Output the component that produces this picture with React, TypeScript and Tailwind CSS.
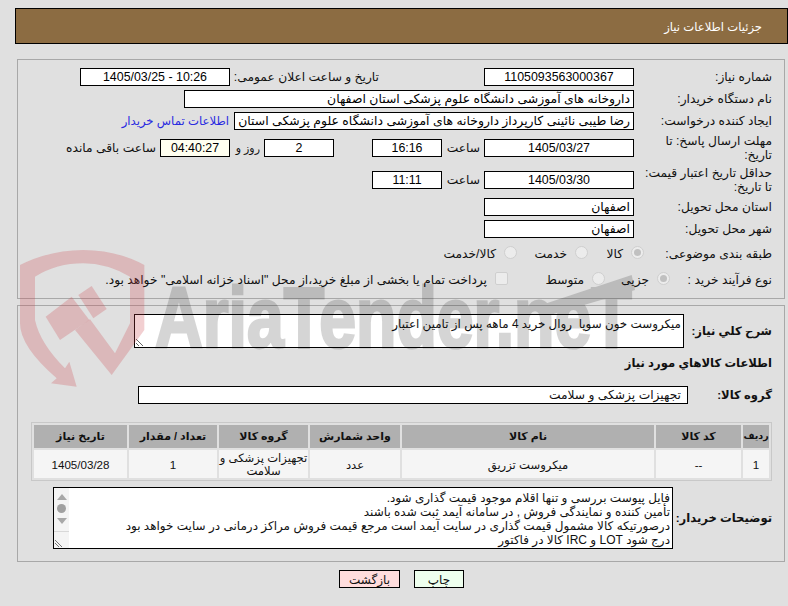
import React from "react";

const font = "[font-family:'Liberation_Sans','DejaVu_Sans',sans-serif]";
const box = "h-[18px] border border-black bg-white px-[3px] text-[12.4px] text-black outline-none shrink-0";

function Field({ w, value, center, bg }: { w: string; value: string; center?: boolean; bg?: string }) {
  return (
    <input
      readOnly
      value={value}
      className={`${box} ${w} ${center ? "text-center" : "text-right"} ${bg ?? ""}`}
    />
  );
}

function Label({ children, w }: { children: React.ReactNode; w?: string }) {
  return <div className={`${w ?? "w-[138px]"} shrink-0 pl-[6px] text-right leading-[14px]`}>{children}</div>;
}

function Radio({ checked, label, w }: { checked?: boolean; label: string; w: string }) {
  return (
    <div className={`flex items-center ${w} shrink-0`}>
      <span className="mb-1 flex h-[13px] w-[13px] shrink-0 items-center justify-center rounded-full border border-[#cfcfcf] bg-[#ececec]">
        {checked && <span className="h-[7px] w-[7px] rounded-full bg-[#c0c0c0]" />}
      </span>
      <span className="mr-[8px] whitespace-nowrap">{label}</span>
    </div>
  );
}

const cols = [
  { w: "w-[26px]", t: "text-[9.5px]", h: "ردیف", v: "1" },
  { w: "w-[85px]", t: "text-[11px]", h: "کد کالا", v: "--" },
  { w: "w-[252px]", t: "text-[11px]", h: "نام کالا", v: "میکروست تزریق" },
  { w: "w-[90px]", t: "text-[11px]", h: "واحد شمارش", v: "عدد" },
  { w: "w-[89px]", t: "text-[11px]", h: "گروه کالا", v: "تجهیزات پزشکی و\nسلامت" },
  { w: "w-[88px]", t: "text-[11px]", h: "تعداد / مقدار", v: "1" },
  { w: "w-[93px]", t: "text-[11px]", h: "تاریخ نیاز", v: "1405/03/28" },
];

export default function App() {
  return (
    <div dir="rtl" className={`relative h-[606px] w-[788px] overflow-hidden bg-[#e0e0e0] text-[12.25px] text-[#111] ${font}`}>
      <div className="ml-[15px] mt-[8px] flex h-[36px] items-center border border-black bg-[#8c6c42] pr-[25px] pt-px text-[11.6px] text-white">
        جزئیات اطلاعات نیاز
      </div>

      <div className="ml-[17px] mr-[3px] mt-[15px] h-[240px] border border-[#a8a8a8] pt-[6px] pr-[12px]">
        <div className="flex h-[22px] items-center">
          <Label>شماره نیاز:</Label>
          <Field w="w-[150px]" value="1105093563000367" center />
          <div className="w-[254px] shrink-0 whitespace-nowrap pr-[105px] text-right">تاریخ و ساعت اعلان عمومی:</div>
          <Field w="w-[150px]" value="10:26 - 1405/03/25" center />
        </div>
        <div className="flex h-[22px] items-center">
          <Label>نام دستگاه خریدار:</Label>
          <Field w="w-[450px]" value="داروخانه های آموزشی دانشگاه علوم پزشکی استان اصفهان" />
        </div>
        <div className="flex h-[22px] items-center">
          <Label>ایجاد کننده درخواست:</Label>
          <Field w="w-[400px]" value="رضا طیبی نائینی کارپرداز داروخانه های آموزشی دانشگاه علوم پزشکی استان اصفهان" />
          <span className="mr-[5px] whitespace-nowrap text-[11.7px] text-[#2a2ae0]">اطلاعات تماس خریدار</span>
        </div>
        <div className="flex h-[32px] items-center">
          <Label>مهلت ارسال پاسخ: تا تاریخ:</Label>
          <Field w="w-[150px]" value="1405/03/27" center />
          <div className="w-[42px] shrink-0 pr-[4px] text-right">ساعت</div>
          <Field w="w-[70px]" value="16:16" center />
          <div className="w-[38px] shrink-0" />
          <Field w="w-[70px]" value="2" center />
          <div className="w-[34px] shrink-0 pr-[4px] text-right text-[11px]">روز و</div>
          <Field w="w-[70px]" value="04:40:27" center bg="!bg-[#fffff0]" />
          <span className="mr-[4px] whitespace-nowrap">ساعت باقی مانده</span>
        </div>
        <div className="flex h-[32px] items-center">
          <Label>حداقل تاریخ اعتبار قیمت: تا تاریخ:</Label>
          <Field w="w-[150px]" value="1405/03/30" center />
          <div className="w-[42px] shrink-0 pr-[4px] text-right">ساعت</div>
          <Field w="w-[70px]" value="11:11" center />
        </div>
        <div className="flex h-[22px] items-center">
          <Label>استان محل تحویل:</Label>
          <Field w="w-[150px]" value="اصفهان" />
        </div>
        <div className="flex h-[22px] items-center">
          <Label>شهر محل تحویل:</Label>
          <Field w="w-[150px]" value="اصفهان" />
        </div>
        <div className="flex h-[28px] items-center">
          <Label w="w-[128px]">طبقه بندی موضوعی:</Label>
          <Radio checked label="کالا" w="w-[56px]" />
          <Radio label="خدمت" w="w-[71px]" />
          <Radio label="کالا/خدمت" w="w-[80px]" />
        </div>
        <div className="flex h-[24px] items-center">
          <Label w="w-[102px]">نوع فرآیند خرید :</Label>
          <Radio checked label="جزیی" w="w-[65px]" />
          <Radio label="متوسط" w="w-[97px]" />
          <span className="mb-1 h-[13px] w-[13px] shrink-0 rounded-[2px] border border-[#cfcfcf] bg-[#ececec]" />
          <span className="mr-[8px] whitespace-nowrap">پرداخت تمام یا بخشی از مبلغ خرید،از محل "اسناد خزانه اسلامی" خواهد بود.</span>
        </div>
      </div>

      <div className="ml-[17px] mr-[3px] mt-[6px] h-[257px] border border-[#a8a8a8] pr-[12px] pt-[8px]">
        <div className="flex h-[34px] items-center">
          <div className="w-[88px] shrink-0 whitespace-nowrap text-right text-[11.6px] font-bold">شرح کلي نیاز:</div>
          <textarea
            readOnly
            value="میکروست خون سوپا  روال خرید 4 ماهه پس از تامین اعتبار"
            className="h-[34px] w-[550px] border border-black bg-white px-[2px] py-[2px] text-[11.9px] leading-[14px] outline-none"
          />
        </div>
        <div className="flex h-[30px] items-center text-[11.6px] font-bold">اطلاعات کالاهاي مورد نیاز</div>
        <div className="mt-[8px] flex h-[18px] items-center">
          <div className="w-[84px] shrink-0 whitespace-nowrap text-right text-[11.6px] font-bold">گروه کالا:</div>
          <input
            readOnly
            value="تجهیزات پزشکی و سلامت"
            className="h-[18px] w-[550px] border border-black bg-white px-[6px] text-right text-[12.25px] outline-none"
          />
        </div>
        <table className="mt-[18px] w-[741px] table-fixed border-separate border-spacing-[2px] border border-[#c8c8c8]">
          <thead>
            <tr>
              {cols.map((c) => (
                <th key={c.h} className={`${c.w} ${c.t} h-[23px] bg-[#b0b0b0] p-0 text-center font-bold`}>
                  {c.h}
                </th>
              ))}
            </tr>
          </thead>
          <tbody>
            <tr>
              {cols.map((c) => (
                <td key={c.h} className={`${c.w} h-[28px] whitespace-pre bg-[#f5f5f5] p-0 text-center text-[11.6px] leading-[13px]`}>
                  {c.v}
                </td>
              ))}
            </tr>
          </tbody>
        </table>
        <div className="mt-[6px] flex items-center">
          <div className="w-[99px] shrink-0 whitespace-nowrap text-right text-[11.6px] font-bold">توضیحات خریدار:</div>
          <div className="flex h-[62px] w-[620px] shrink-0 overflow-hidden border border-black bg-white">
            <div className="min-w-0 flex-1 overflow-hidden whitespace-nowrap px-[2px] pt-[3px] text-[12px] leading-[14px]">
              <div>فایل پیوست بررسی و تنها اقلام موجود قیمت گذاری شود.</div>
              <div>تأمین کننده و نمایندگی فروش , در سامانه آیمد ثبت شده باشند</div>
              <div>درصورتیکه کالا مشمول قیمت گذاری در سایت آیمد است مرجع قیمت فروش مراکز درمانی در سایت خواهد بود</div>
              <div>درج شود LOT و IRC کالا در فاکتور</div>
            </div>
            <div className="flex w-[15px] shrink-0 flex-col items-center bg-[#f4f4f4]">
              <span className="mt-[6px] h-0 w-0 border-x-[5px] border-b-[6px] border-x-transparent border-b-[#a8a8a8]" />
              <span className="mt-[4px] h-[9px] w-[9px] rounded-full bg-[#a0a0a0]" />
              <span className="mt-[5px] h-0 w-0 border-x-[5px] border-t-[6px] border-x-transparent border-t-[#a8a8a8]" />
              <span className="mt-[7px] h-px w-full bg-[#d8d8d8]" />
              <svg width="15" height="15" viewBox="0 0 15 15" className="mt-auto">
                <path d="M1 7l7 7M1 10l4 4" stroke="#777" strokeWidth="1" fill="none" />
              </svg>
            </div>
          </div>
        </div>
      </div>

      <div className="mt-[8px] flex pr-[324px]">
        <button className="h-[18px] w-[50px] border border-black bg-[#eeffee] text-[12px]">چاپ</button>
        <button className="mr-[14px] h-[18px] w-[61px] border border-black bg-[#ffdddd] text-[12px]">بازگشت</button>
      </div>

      <svg
        className="pointer-events-none absolute left-[10px] top-[240px]"
        width="640"
        height="150"
        viewBox="0 0 1920 450"
      >
        <g fill="#cc4048" fillOpacity="0.25">
          <path d="M30 75 Q120 30 220 30 Q320 30 403 75 L403 270 L305 405 L195 270 L240 238 L315 340 L360 250 L360 110 Q290 70 220 70 Q140 70 75 110 L75 240 Q90 310 165 385 L178 365 L200 440 L123 430 L140 415 Q30 320 30 250 Z" />
          <path d="M107 230 L185 170 L238 240 L150 300 Z" />
          <path d="M205 165 L245 138 L290 207 L250 235 Z" />
        </g>
        <g opacity="0.16">
          <text
            x="435"
            y="320"
            direction="ltr"
            textAnchor="start"
            fill="#000"
            stroke="#000"
            strokeWidth="9"
            fontFamily="'Liberation Sans', sans-serif"
            fontWeight="700"
            fontSize="255"
            textLength="1430"
            lengthAdjust="spacingAndGlyphs"
          >
            AriaTender.neT
          </text>
          <path d="M1610 190 L1865 105 L1875 150 L1620 225 Z" fill="#000" />
        </g>
      </svg>
    </div>
  );
}
